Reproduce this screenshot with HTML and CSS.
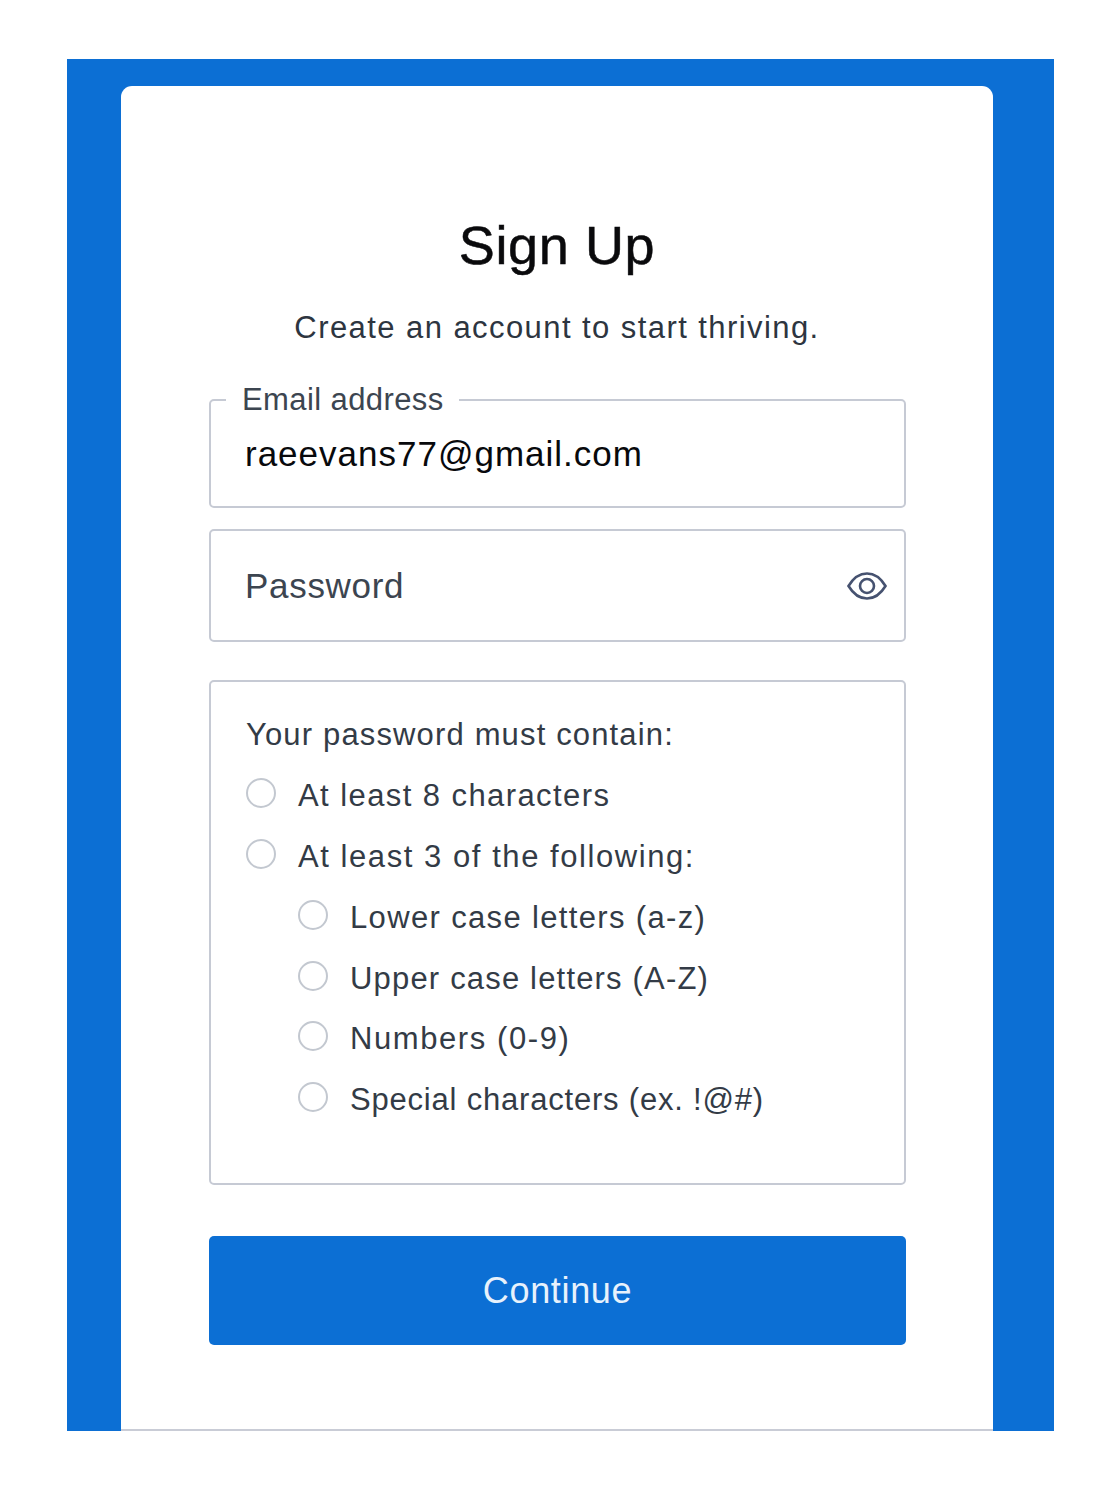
FILE: index.html
```html
<!DOCTYPE html>
<html lang="en">
<head>
<meta charset="utf-8">
<title>Sign Up</title>
<link rel="stylesheet" href="styles.css">
</head>
<body>
<main class="frame">
  <section class="card">
    <h1 class="title">Sign Up</h1>
    <p class="subtitle">Create an account to start thriving.</p>
    <form class="form">
      <fieldset class="field field-email">
        <legend class="legend">Email address</legend>
        <div class="value">raeevans77@gmail.com</div>
      </fieldset>
      <div class="field field-password">
        <span class="placeholder">Password</span>
        <svg class="eye" viewBox="0 0 40 30" width="40" height="30" aria-hidden="true">
          <path d="M1.500 15C6 7.500 12.500 2.500 20 2.500S34 7.500 38.500 15C34 22.500 27.500 27.500 20 27.500S6 22.500 1.500 15Z"/>
          <circle cx="20" cy="15" r="7"/>
        </svg>
      </div>
      <div class="rules">
        <p class="rules-title">Your password must contain:</p>
        <ul class="list">
          <li class="item track-wide"><span class="dot"></span>At least 8 characters</li>
          <li class="item track-wider"><span class="dot"></span>At least 3 of the following:</li>
          <li class="item sub track-mid"><span class="dot"></span>Lower case letters (a-z)</li>
          <li class="item sub track-low"><span class="dot"></span>Upper case letters (A-Z)</li>
          <li class="item sub track-num"><span class="dot"></span>Numbers (0-9)</li>
          <li class="item sub track-tight"><span class="dot"></span>Special characters (ex. !@#)</li>
        </ul>
      </div>
      <button class="button" type="button">Continue</button>
    </form>
  </section>
</main>
</body>
</html>
```

FILE: styles.css
```css
* { box-sizing: border-box; }
html, body { margin: 0; padding: 0; background: #fff; }
body {
  width: 1118px;
  height: 1490px;
  padding: 59px 64px 59px 67px;
  font-family: "Liberation Sans", Arial, sans-serif;
  overflow: hidden;
}
.frame {
  width: 987px;
  height: 1372px;
  background: #0c6fd4;
  padding: 27px 61px 0 54px;
}
.card {
  height: 1345px;
  background: #fff;
  border-radius: 11px 11px 0 0;
  border-bottom: 2px solid #c9ccd6;
  padding: 127px 88px 0;
  text-align: center;
}
.title {
  margin: 0;
  font-size: 54px;
  line-height: 64px;
  font-weight: 400;
  letter-spacing: 0.6px;
  color: #0a0a0c;
  -webkit-text-stroke: 0.5px #0a0a0c;
}
.subtitle {
  margin: 33px 0 0;
  font-size: 31px;
  line-height: 36px;
  color: #2d3540;
  letter-spacing: 1.43px;
}
.form {
  text-align: left;
  margin: 37px -1px 0 0;
  display: flex;
  flex-direction: column;
}
.field {
  border: 2px solid #c6cad4;
  border-radius: 5px;
  margin: 0;
}
.field-email {
  height: 125px;
  padding: 0 34px;
  min-width: 0;
}
.legend {
  margin-left: -19px;
  padding: 0 15px 0 16px;
  font-size: 31px;
  line-height: 33px;
  height: 33px;
  letter-spacing: 0.4px;
  color: #3c4550;
}
.value {
  font-size: 35px;
  line-height: 44px;
  margin-top: 16px;
  color: #08090c;
  letter-spacing: 1px;
}
.field-password {
  margin-top: 21px;
  height: 113px;
  padding: 0 17px 0 34px;
  display: flex;
  align-items: center;
  justify-content: space-between;
}
.placeholder {
  font-size: 35px;
  line-height: 44px;
  color: #3c4550;
  letter-spacing: 0.7px;
}
.eye { display: block; }
.eye path, .eye circle {
  fill: none;
  stroke: #465270;
  stroke-width: 2.6;
}
.rules {
  margin-top: 38px;
  height: 505px;
  border: 2px solid #c6cad4;
  border-radius: 5px;
  padding: 33px 35px 0;
}
.rules-title {
  margin: 0;
  font-size: 31px;
  line-height: 40px;
  color: #333b46;
  letter-spacing: 1.15px;
}
.list {
  list-style: none;
  margin: 10.8px 0 0;
  padding: 0;
}
.item {
  display: flex;
  align-items: center;
  height: 60.8px;
  font-size: 31px;
  color: #333b46;
}
.track-wider { letter-spacing: 1.56px; }
.track-wide { letter-spacing: 1.42px; }
.track-num { letter-spacing: 1.58px; }
.track-mid { letter-spacing: 1.35px; }
.track-low { letter-spacing: 1.18px; }
.track-tight { letter-spacing: 0.8px; }
.sub { margin-left: 52px; }
.dot {
  width: 30px;
  height: 30px;
  border: 2px solid #c3c8d0;
  border-radius: 50%;
  margin-right: 22px;
  margin-top: -6px;
  flex: none;
}
.button {
  margin-top: 51px;
  height: 109px;
  border: 0;
  border-radius: 5px;
  background: #0c6fd4;
  color: #e8f2fc;
  font-family: inherit;
  font-size: 36px;
  letter-spacing: 0.65px;
}
```
